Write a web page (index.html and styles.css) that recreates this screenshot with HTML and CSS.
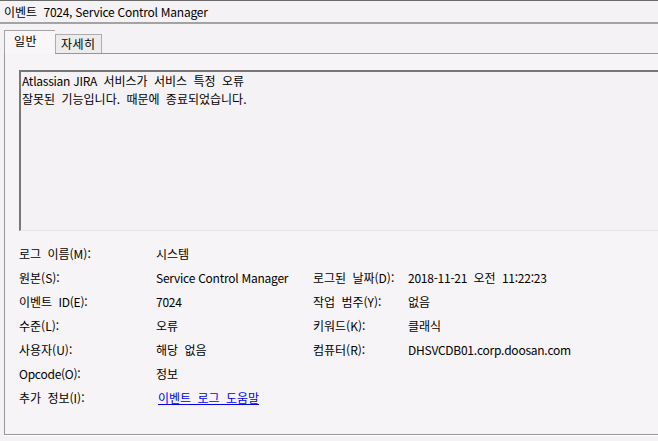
FILE: index.html
```html
<!DOCTYPE html>
<html lang="ko">
<head>
<meta charset="utf-8">
<title>이벤트 7024</title>
<link rel="stylesheet" href="styles.css">
</head>
<body>
<div class="window">
  <div class="title">이벤트 <span class="en">7024, Service Control Manager</span></div>
  <div class="tabs">
    <div class="tab active">일반</div>
    <div class="tab">자세히</div>
  </div>
  <div class="panel">
    <div class="message">
      <div><span class="en">Atlassian JIRA</span> 서비스가 서비스 특정 오류</div>
      <div>잘못된 기능입니다. 때문에 종료되었습니다.</div>
    </div>
    <div class="props">
      <div class="label">로그 이름(M):</div><div class="value">시스템</div><div></div><div></div>
      <div class="label">원본(S):</div><div class="value en">Service Control Manager</div><div class="label">로그된 날짜(D):</div><div class="value"><span class="en">2018-11-21</span> 오전 <span class="en">11:22:23</span></div>
      <div class="label">이벤트 <span class="en">ID(E):</span></div><div class="value en">7024</div><div class="label">작업 범주(Y):</div><div class="value">없음</div>
      <div class="label">수준(L):</div><div class="value">오류</div><div class="label">키워드(K):</div><div class="value">클래식</div>
      <div class="label">사용자(U):</div><div class="value">해당 없음</div><div class="label">컴퓨터(R):</div><div class="value en">DHSVCDB01.corp.doosan.com</div>
      <div class="label en">Opcode(O):</div><div class="value">정보</div><div></div><div></div>
      <div class="label">추가 정보(I):</div><div class="value"><a class="link" href="#">이벤트 로그 도움말</a></div><div></div><div></div>
    </div>
  </div>
</div>
</body>
</html>
```
FILE: styles.css
```css
html, body {
  margin: 0;
  padding: 0;
  background: #f5f2f5;
  overflow: hidden;
}
.window {
  width: 658px;
  height: 441px;
  font-family: "Noto Sans CJK KR", "Noto Sans", sans-serif;
  font-size: 12px;
  word-spacing: 3px;
  color: #000;
  overflow: hidden;
}
.en {
  letter-spacing: -0.25px;
  word-spacing: 0;
}
.title {
  height: 21px;
  line-height: 21px;
  border-top: 1px solid #6a6a6a;
  border-bottom: 2px solid #a3a3a3;
  padding-left: 4px;
  white-space: nowrap;
}
.tabs {
  display: flex;
  align-items: flex-end;
  margin-top: 6px;
  padding-left: 4px;
  height: 23px;
  position: relative;
  z-index: 1;
}
.tab {
  box-sizing: border-box;
  height: 19px;
  line-height: 17px;
  border: 1px solid #adadad;
  border-bottom: none;
  background: #ececec;
  width: 47px;
  text-align: left;
  padding-left: 5px;
  letter-spacing: 0.5px;
}
.tab.active {
  width: 51px;
  height: 24px;
  background: #f8f6f8;
  border-color: #a3a3a3;
  border-right: none;
  padding-left: 9px;
  line-height: 20px;
  margin-bottom: -1px;
}
.panel {
  width: 720px;
  box-sizing: border-box;
  margin-left: 4px;
  height: 382px;
  border: 1px solid #979797;
  border-right: none;
  background: #f7f4f7;
  padding: 16px 0 0 14px;
  box-shadow: 0 1px 0 #ffffff;
}
.message {
  box-sizing: border-box;
  height: 161px;
  border-top: 2px solid #777;
  border-left: 2px solid #777;
  border-bottom: 1px solid #e3e3e3;
  padding: 0 0 0 1px;
  line-height: 18px;
  background: #f5f2f5;
}
.props {
  display: grid;
  grid-template-columns: 137px 157px 95px auto;
  grid-auto-rows: 24px;
  align-items: center;
  margin-top: 10px;
}
.label, .value {
  white-space: nowrap;
}
.link {
  color: #0000ee;
  text-decoration: underline;
  margin-left: 2px;
}
```
